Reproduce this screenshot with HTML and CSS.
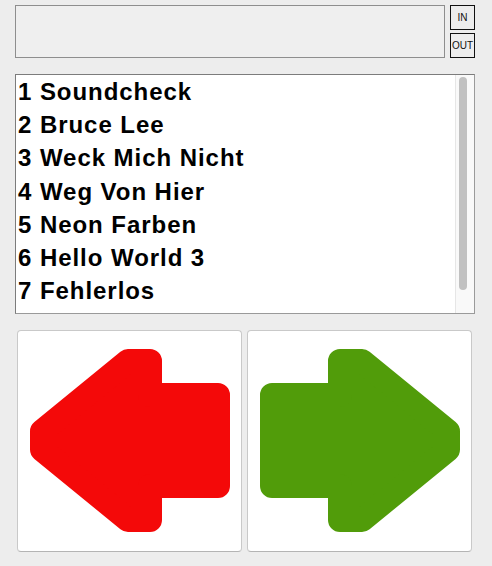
FILE: index.html
```html
<!DOCTYPE html>
<html>
<head>
<meta charset="utf-8">
<link rel="stylesheet" href="styles.css">
</head>
<body>
<div class="app">
  <div class="top">
    <div class="display"></div>
    <div class="io">
      <div class="io-btn">IN</div>
      <div class="io-btn">OUT</div>
    </div>
  </div>
  <div class="list">
    <div class="items">
      <div class="item">1 Soundcheck</div>
      <div class="item">2 Bruce Lee</div>
      <div class="item">3 Weck Mich Nicht</div>
      <div class="item">4 Weg Von Hier</div>
      <div class="item">5 Neon Farben</div>
      <div class="item">6 Hello World 3</div>
      <div class="item">7 Fehlerlos</div>
      <div class="item">8 Schwerelos</div>
    </div>
    <div class="scrollbar"><div class="thumb"></div></div>
  </div>
  <div class="nav">
    <div class="nav-btn">
      <svg class="arrow" viewBox="1 1 223 220" width="223" height="220">
        <polygon points="111,31 133,31 133,65 201,65 201,156 133,156 133,190 111,190 25,119.6 25,101.4" fill="#f40909" stroke="#f40909" stroke-width="24" stroke-linejoin="round"/>
      </svg>
    </div>
    <div class="nav-btn">
      <svg class="arrow" viewBox="1 1 223 220" width="223" height="220">
        <polygon points="115,31 93,31 93,65 25,65 25,156 93,156 93,190 115,190 201,119.6 201,101.4" fill="#519c0a" stroke="#519c0a" stroke-width="24" stroke-linejoin="round"/>
      </svg>
    </div>
  </div>
</div>
</body>
</html>
```
FILE: styles.css
```css
html, body {
  margin: 0;
  padding: 0;
  background: #ededed;
}
body {
  width: 492px;
  height: 566px;
  overflow: hidden;
  font-family: "Liberation Sans", Arial, sans-serif;
}
.app {
  padding: 5px 17px 0 15px;
  display: flex;
  flex-direction: column;
}
.top {
  display: flex;
  gap: 5px;
  height: 53px;
}
.display {
  flex: 1;
  background: #efefef;
  border: 1px solid #8e8e8e;
}
.io {
  width: 25px;
  display: flex;
  flex-direction: column;
  gap: 3px;
}
.io-btn {
  height: 25px;
  box-sizing: border-box;
  border: 1px solid #111;
  display: flex;
  align-items: center;
  justify-content: center;
  font-size: 10px;
  color: #111;
}
.list {
  margin-top: 16px;
  height: 240px;
  box-sizing: border-box;
  border: 1px solid #7c7c7c;
  border-right-color: #9a9a9a;
  border-bottom-color: #9a9a9a;
  background: #fff;
  display: flex;
}
.items {
  flex: 1;
  overflow: hidden;
  padding-left: 2px;
}
.item {
  font-size: 24px;
  font-weight: bold;
  line-height: 33.2px;
  letter-spacing: 0.95px;
  color: #000;
  white-space: nowrap;
}
.scrollbar {
  width: 15px;
  border-left: 1px solid #e6e6e6;
  background: #f9f9f9;
  padding: 2px 0 0 3px;
}
.thumb {
  width: 8px;
  height: 213px;
  border-radius: 4px;
  background: #c1c1c1;
}
.nav {
  margin: 16px 3px 0 2px;
  display: flex;
  gap: 5px;
  height: 222px;
}
.nav-btn {
  flex: 1;
  box-sizing: border-box;
  background: #fff;
  border: 1px solid #c9c9c9;
  border-bottom-color: #b4b4b4;
  border-radius: 4px;
  display: flex;
}
.arrow {
  display: block;
}
```
